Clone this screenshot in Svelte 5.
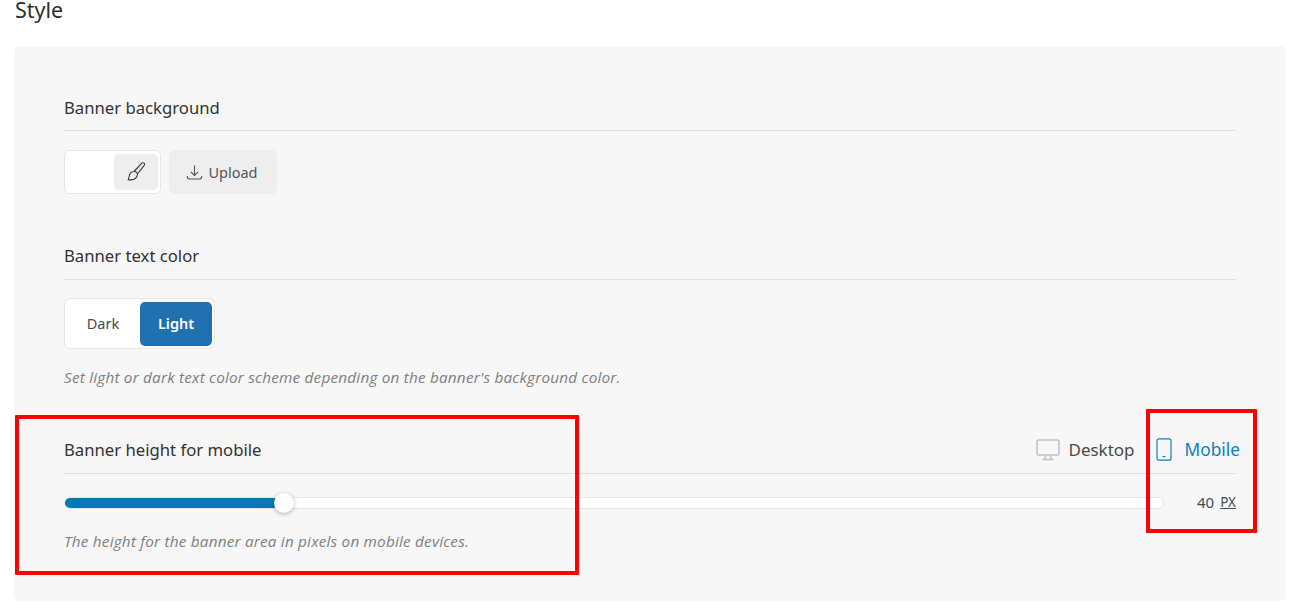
<script lang="ts">
  let height = 40;
  let fillPct = 19.9;
  let mode = 'Light';
</script>

<div class="page">
  <h2 class="title">Style</h2>

  <div class="card">
    <section class="group first">
      <div class="head"><h3>Banner background</h3></div>
      <div class="bg-row">
        <div class="swatch">
          <button class="picker" aria-label="Pick color">
            <svg width="22" height="22" viewBox="0 0 22 22" fill="none" stroke="#33383d" stroke-width="1.1" stroke-linejoin="round">
              <path d="M9 10.5 16.4 2.6c.8-.9 2-1 2.7-.4.7.6.6 1.6-.1 2.4L12.4 13" />
              <path d="M9 10.5c1.8-.2 3.4.9 3.4 2.5 0 2.4-1.7 4.6-4 5.4-1.5.5-3.6.6-5.3.4.8-1 1-2.4 1.2-3.8.3-2.4 2.2-4.3 4.7-4.5z" />
            </svg>
          </button>
        </div>
        <button class="upload">
          <svg width="17" height="17" viewBox="0 0 17 17" fill="none" stroke="#555" stroke-width="1.1">
            <path d="M8.5 1.5v10M4.8 7.8l3.7 3.7 3.7-3.7" />
            <path d="M1.2 12c0 2 .8 3 2.4 3h9.8c1.6 0 2.4-1 2.4-3" />
          </svg>
          <span>Upload</span>
        </button>
      </div>
    </section>

    <section class="group text-color">
      <div class="head"><h3>Banner text color</h3></div>
      <div class="toggle">
        <button class="opt" class:active={mode === 'Dark'}>Dark</button>
        <button class="opt" class:active={mode === 'Light'}>Light</button>
      </div>
      <p class="help">Set light or dark text color scheme depending on the banner's background color.</p>
    </section>

    <section class="group height">
      <div class="head split">
        <h3>Banner height for mobile</h3>
        <div class="devices">
          <div class="device">
            <svg width="24" height="22" viewBox="0 0 24 22" fill="none" stroke="#c4c4c4" stroke-width="1.6">
              <rect x="1" y="1" width="22" height="15" rx="1.5" />
              <path d="M9.5 16.5 9 20M14.5 16.5 15 20M6.5 20.5h11" />
            </svg>
            <span>Desktop</span>
          </div>
          <div class="device on">
            <svg width="16" height="23" viewBox="0 0 16 23" fill="none" stroke="#0a7fc0" stroke-width="1.2">
              <rect x="1" y="0.8" width="14" height="21.4" rx="2" />
              <path d="M6.5 18.6h3" />
            </svg>
            <span>Mobile</span>
          </div>
        </div>
      </div>
      <div class="slider-row">
        <div class="track">
          <div class="fill" style="width: {fillPct}%"></div>
          <div class="thumb" style="left: {fillPct}%"></div>
        </div>
        <div class="value">{height}<span class="unit">PX</span></div>
      </div>
      <p class="help">The height for the banner area in pixels on mobile devices.</p>
    </section>
  </div>

  <div class="mark mark-left"></div>
  <div class="mark mark-right"></div>
</div>

<style>
  :global(body) {
    margin: 0;
    background: #fff;
    font-family: "Noto Sans", "Open Sans", sans-serif;
    color: #333;
  }

  .page {
    position: relative;
    width: 1308px;
    height: 603px;
    overflow: hidden;
    padding: 0 22px 0 14px;
    box-sizing: border-box;
  }

  .title {
    margin: 0;
    height: 46px;
    padding-left: 1px;
    font-size: 21.5px;
    font-weight: 400;
    line-height: 20px;
    color: #2b2f33;
  }

  .card {
    height: 555px;
    box-sizing: border-box;
    padding: 50px 50px 0;
    background: #f7f7f7;
    border-radius: 6px;
  }

  .head {
    display: flex;
    align-items: flex-start;
    height: 24px;
    padding-bottom: 10px;
    border-bottom: 1px solid #dfdfdf;
  }

  .text-color .head,
  .height .head {
    height: 25px;
  }

  .head.split {
    justify-content: space-between;
  }

  h3 {
    margin: 0;
    font-size: 16.7px;
    font-weight: 400;
    line-height: 24px;
    color: #333;
  }

  .group.text-color {
    margin-top: 50px;
  }

  .group.height {
    margin-top: 51px;
  }

  .bg-row {
    display: flex;
    gap: 8px;
    margin-top: 19px;
  }

  button {
    font: inherit;
    border: none;
    padding: 0;
    cursor: pointer;
  }

  .swatch {
    width: 97px;
    height: 44px;
    box-sizing: border-box;
    background: #fff;
    border: 1px solid #e6e6e6;
    border-radius: 6px;
    padding: 3px 2px 3px 3px;
    display: flex;
    justify-content: flex-end;
  }

  .picker {
    width: 44px;
    height: 36px;
    background: #eeeeee;
    border-radius: 5px;
    display: flex;
    align-items: center;
    justify-content: center;
  }

  .upload {
    width: 108px;
    height: 44px;
    padding-right: 2px;
    background: #eeeeee;
    border-radius: 6px;
    display: flex;
    align-items: center;
    justify-content: center;
    gap: 5px;
    font-size: 14.5px;
    color: #555;
  }

  .toggle {
    display: inline-flex;
    box-sizing: border-box;
    height: 51px;
    margin-top: 18px;
    padding: 3px 2px 3px 3px;
    background: #fff;
    border: 1px solid #e6e6e6;
    border-radius: 6px;
    vertical-align: top;
  }

  .opt {
    height: 44px;
    width: 72px;
    padding: 0 2px 2px 0;
    background: transparent;
    border-radius: 5px;
    font-size: 14.5px;
    color: #444b54;
  }

  .opt.active {
    padding-right: 0;
    background: #2170b0;
    color: #fff;
    font-weight: 600;
  }

  .help {
    margin: 0;
    font-family: "Open Sans", "Noto Sans", sans-serif;
    font-size: 15.3px;
    letter-spacing: 0.2px;
    line-height: 20px;
    font-style: italic;
    color: #808080;
  }

  .text-color .help {
    margin-top: 18px;
  }

  .height .help {
    margin-top: 16px;
  }

  .devices {
    display: flex;
    align-items: center;
    gap: 21px;
    margin-right: -4px;
  }

  .device {
    display: flex;
    align-items: center;
    gap: 8px;
    font-size: 17px;
    color: #4a4a4a;
  }

  .device.on {
    gap: 13px;
    font-size: 17.3px;
    color: #0a7fc0;
  }

  .slider-row {
    display: flex;
    align-items: center;
    height: 24px;
    margin-top: 17px;
  }

  .track {
    position: relative;
    width: 1100px;
    height: 12px;
    box-sizing: border-box;
    background: #fff;
    border: 1px solid #e6e6e6;
    border-radius: 6px;
  }

  .fill {
    height: 10px;
    background: #0079b8;
    border-radius: 5px 0 0 5px;
  }

  .thumb {
    position: absolute;
    top: 50%;
    width: 20px;
    height: 20px;
    background: #fff;
    border-radius: 50%;
    transform: translate(-50%, -50%);
    box-shadow: 0 1px 4px rgba(0, 0, 0, 0.3);
  }

  .value {
    margin-left: auto;
    margin-bottom: 2px;
    font-size: 15px;
    color: #444b54;
  }

  .unit {
    margin-left: 6px;
    font-size: 13.5px;
    text-decoration: underline;
    position: relative;
    top: -1px;
  }

  /* annotation boxes drawn over the screenshot */
  .mark {
    position: absolute;
    box-sizing: border-box;
    border: 4px solid #ff0000;
    border-radius: 1px;
  }

  .mark-left {
    left: 15px;
    top: 415px;
    width: 564px;
    height: 160px;
  }

  .mark-right {
    left: 1146px;
    top: 409px;
    width: 111px;
    height: 124px;
  }
</style>
